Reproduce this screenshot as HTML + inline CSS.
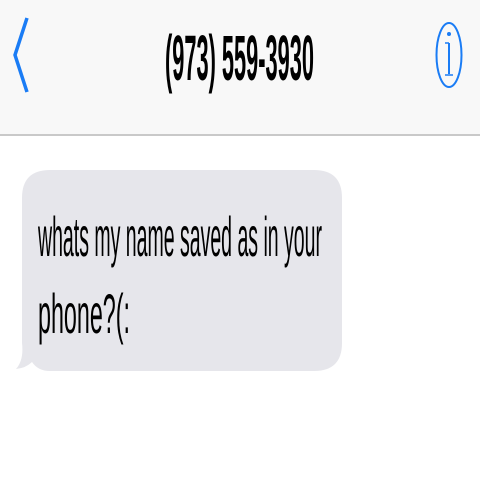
<!DOCTYPE html>
<html><head><style>
html,body{margin:0;padding:0;width:480px;height:480px;background:#fff;overflow:hidden}
</style></head><body>
<svg width="480" height="480" viewBox="0 0 480 480" xmlns="http://www.w3.org/2000/svg" style="display:block">
<rect x="0" y="0" width="480" height="134" fill="#f8f8f8"/>
<rect x="0" y="134" width="480" height="2" fill="#c9c9c9"/>
<polyline points="27,18 15,55 27,92" fill="none" stroke="#1a7cf5" stroke-width="3.5" stroke-linejoin="miter"/>
<ellipse cx="449" cy="55" rx="12.5" ry="32" fill="none" stroke="#1a7cf5" stroke-width="2"/>
<circle cx="449" cy="34" r="2" fill="#1a7cf5"/>
<line x1="449" y1="43" x2="449" y2="74" stroke="#1a7cf5" stroke-width="2"/>
<line x1="445" y1="43" x2="449" y2="43" stroke="#1a7cf5" stroke-width="1.5"/>
<line x1="445" y1="75" x2="453" y2="75" stroke="#1a7cf5" stroke-width="1.5"/>
<text x="165" y="80" textLength="149" lengthAdjust="spacingAndGlyphs" font-family="Liberation Sans, sans-serif" font-weight="bold" font-size="64" fill="#000">(973) 559-3930</text>
<path d="M50,170 H314 Q342,170 342,198 V343 Q342,371 314,371 H50 Q38,371 32,362 Q26,368 16,369 Q24,360 22,343 V198 Q22,170 50,170 Z" fill="#e6e6eb"/>
<text x="38" y="256" textLength="284" lengthAdjust="spacingAndGlyphs" font-family="Liberation Sans, sans-serif" font-size="56" fill="#000">whats my name saved as in your</text>
<text x="38" y="333" textLength="92" lengthAdjust="spacingAndGlyphs" font-family="Liberation Sans, sans-serif" font-size="56" fill="#000">phone?(:</text>
</svg>
</body></html>
